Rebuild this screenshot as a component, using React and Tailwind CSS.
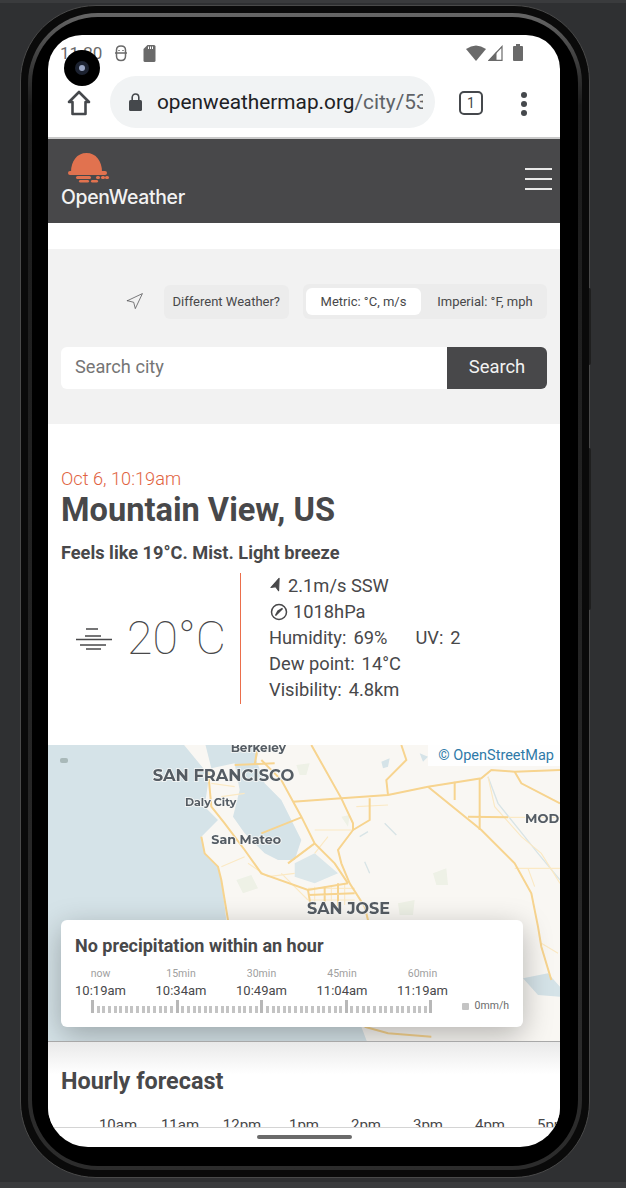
import React from "react";
import { Navigation } from "lucide-react";

const roboto = { fontFamily: "Roboto, sans-serif" };

const minutes = [
  ["now", "10:19am"],
  ["15min", "10:34am"],
  ["30min", "10:49am"],
  ["45min", "11:04am"],
  ["60min", "11:19am"],
];

const hours = ["10am", "11am", "12pm", "1pm", "2pm", "3pm", "4pm", "5pm"];

// main roads, coordinates taken from the reference at 3x
const roads = [
  "M790 15 L880 175 L915 250 L915 270 L870 330 L880 370 L905 430 L950 500 L965 560",
  "M735 185 L880 175 L1020 165 L1140 140 L1300 115 L1330 90 L1400 95 L1536 90",
  "M1140 140 L1300 270 L1400 370 L1450 460 L1470 560 L1480 620 L1510 720",
  "M640 60 L700 120 L760 230 L800 310 L860 370 L900 430",
  "M1020 165 L1015 120 L1075 60 L1060 15",
  "M965 175 L965 240 L915 270",
  "M1295 115 L1295 270 M1220 125 L1220 180 M1260 230 L1380 232",
  "M640 280 L760 232 M720 370 L800 310",
  "M480 90 L490 200 L530 250 L590 330 L640 400 L780 450 L900 430",
  "M460 290 L470 340 L510 380 L520 420 L540 540 L535 600",
  "M780 450 L790 510 M830 440 L830 500 M870 430 L870 500 M780 465 L920 460",
  "M620 75 L630 15 M560 75 L680 70",
  "M1400 95 L1420 130 L1536 190",
  "M950 860 L1020 880 L1150 890",
];

// lighter side roads and the city grid
const sideRoads = [
  "M1380 232 L1536 232 M1400 385 L1536 385 M1320 110 L1340 200 L1420 290 L1480 340 L1536 430",
  "M800 270 L860 270 L915 270 M840 290 L800 340 M925 200 L1020 195",
  "M520 380 L590 350 M600 370 L660 410 L740 400 M700 400 L780 480",
  "M800 440 L800 505 M850 435 L850 500 M890 430 L890 495 M780 445 L920 445 M780 480 L920 480",
  "M1480 610 L1530 640 M1440 385 L1460 440 M520 170 L590 160 M490 130 L560 140",
  "M1170 840 L1300 860 M1020 800 L1120 860",
];

function MapBlock() {
  return (
    <div className="relative h-[297px] shrink-0 overflow-hidden bg-[#f9f7f3] border-b border-[#a8a8a8]">
      <svg viewBox="0 15 1536 888" className="w-full h-full block">
        <defs>
          <filter id="soft" x="-5%" y="-5%" width="110%" height="110%"><feGaussianBlur stdDeviation="2" /></filter>
          <filter id="label"><feGaussianBlur stdDeviation="0.9" /></filter>
        </defs>
        <g filter="url(#soft)">
          <path fill="#d5e3e8" d="M-10 5 H400 L470 90 L480 130 L470 200 L510 240 L460 290 L470 340 L510 380 L520 420 L535 540 L540 640 L720 800 L940 860 L960 913 H-10 Z" />
          <path fill="#d5e3e8" d="M470 5 H640 L625 60 L650 130 L700 180 L730 240 L760 300 L740 360 L690 360 L650 340 L590 280 L555 230 L575 150 L560 70 L490 85 Z" />
          <path fill="#dbe7ea" d="M740 370 L800 340 L870 400 L800 430 L740 410 Z" />
          <path fill="#d5e3e8" d="M1000 65 L1025 55 L1020 80 L1005 85 Z M1115 40 L1140 50 L1125 65 Z M1425 715 L1500 700 L1536 740 L1536 770 L1470 765 Z" />
          <path fill="#eef1e6" d="M565 420 L610 405 L630 445 L585 460 Z M1050 490 L1100 480 L1095 525 L1055 525 Z M745 75 L785 70 L775 105 L755 105 Z M1155 400 L1195 385 L1200 435 L1165 435 Z M880 230 L905 225 L900 260 Z" />
          <path fill="none" stroke="#d8e4e6" strokeWidth="4" d="M1320 110 L1350 190 L1430 290 L1470 340 L1536 420 M1010 250 L1045 285 M950 365 L965 400 M935 290 L960 275" />
          {sideRoads.map((d, i) => (
            <path key={i} d={d} fill="none" stroke="#fbe9c4" strokeWidth="3.5" />
          ))}
          {roads.map((d, i) => (
            <path key={i} d={d} fill="none" stroke="#f7d48f" strokeWidth="6" />
          ))}
        </g>
        <rect x="36" y="54" width="24" height="15" rx="6" fill="#a9b9b9" />
        <g filter="url(#label)" fontFamily="Montserrat, Inter, sans-serif" fontWeight="700" fill="#545c64" stroke="#f8f8f6" strokeWidth="5" paintOrder="stroke">
          <text x="548" y="36" fontSize="36">Berkeley</text>
          <text x="314" y="124" fontSize="49">SAN FRANCISCO</text>
          <text x="411" y="197" fontSize="33">Daly City</text>
          <text x="490" y="313" fontSize="38">San Mateo</text>
          <text x="777" y="522" fontSize="48">SAN JOSE</text>
          <text x="1431" y="249" fontSize="39">MOD</text>
        </g>
      </svg>
      <div className="absolute top-0 right-0 bg-white/90 pl-[10px] pr-[6px] h-[21px] flex items-center text-[14.5px] text-[#2f7aa8]">
        © OpenStreetMap
      </div>
      <div className="absolute left-[13px] top-[175px] w-[462px] h-[107px] bg-white rounded-[6px] shadow-[0_8px_30px_rgba(0,0,0,0.28)] px-[14px] pt-[15px]">
        <div className="text-[18px] leading-[22px] font-bold text-[#48484a]">No precipitation within an hour</div>
        <div className="flex mt-[10px]">
          {minutes.map(([a, b]) => (
            <div key={a} className="w-[80.5px] shrink-0">
              <div className="w-[51px] text-center text-[10.5px] leading-[14px] text-[#a0a0a0]">{a}</div>
              <div className="w-[51px] text-center text-[13px] leading-[18px] mt-[1px] text-[#48484a] whitespace-nowrap">{b}</div>
            </div>
          ))}
        </div>
        <div className="flex items-center -mt-[1px]">
          <div className="ml-[16px] w-[342px] h-[14px] flex justify-between items-end">
            {Array.from({ length: 61 }).map((_, i) => (
              <div key={i} className={i % 15 === 0 ? "w-[3px] h-[13px] bg-[#b8b8b8]" : "w-[3px] h-[7px] bg-[#c4c4c4]"} />
            ))}
          </div>
          <div className="ml-[29px] w-[7px] h-[7px] bg-[#c4c4c4] rounded-[1px]" />
          <div className="ml-[6px] text-[10.5px] leading-[14px] text-[#6b6b6b] whitespace-nowrap">0mm/h</div>
        </div>
      </div>
    </div>
  );
}

function StatusBar() {
  return (
    <div className="h-[41px] shrink-0 flex items-start justify-between pl-[12px] pr-[37px] pt-[9px] text-[#6a6a6a]">
      <div className="flex items-center">
        <span className="text-[17px] leading-[18px]">11:20</span>
        <svg width="14" height="17" viewBox="0 0 14 17" fill="none" stroke="#6a6a6a" strokeWidth="1.5" className="ml-[12px]">
          <path d="M2.5 5 C2.5 2.5 4.5 1 7 1 C9.5 1 11.5 2.5 11.5 5 V11 C11.5 14 9.5 15.5 7 15.5 C4.5 15.5 2.5 14 2.5 11 Z" />
          <path d="M1 8 H13 M5 5 V6 M9 5 V6" />
        </svg>
        <svg width="13" height="17" viewBox="0 0 12 17" className="ml-[15px]"><path fill="#6a6a6a" d="M4 0 H10.5 Q12 0 12 1.5 V15.5 Q12 17 10.5 17 H1.5 Q0 17 0 15.5 V4 Z" /><path stroke="#fff" strokeWidth="1" d="M5 1.5 V4 M7 1.5 V4 M9 1.5 V4" /></svg>
      </div>
      <div className="flex items-center">
        <svg width="20" height="16" viewBox="0 0 20 16"><path fill="#6a6a6a" d="M0 4 Q10 -3 20 4 L10 16 Z" /></svg>
        <svg width="15" height="16" viewBox="0 0 15 16" className="ml-[2px]"><path fill="none" stroke="#6a6a6a" strokeWidth="1.2" d="M14 1.5 V15.4 H1 Z" /><path fill="#6a6a6a" d="M8.5 6.5 V15.4 H1 Z" /></svg>
        <svg width="10" height="17" viewBox="0 0 10 17" className="ml-[10px]"><path fill="#6a6a6a" d="M3 0 H7 V2 H9 Q10 2 10 3 V16 Q10 17 9 17 H1 Q0 17 0 16 V3 Q0 2 1 2 H3 Z" /></svg>
      </div>
    </div>
  );
}

function ChromeBar() {
  return (
    <div className="h-[63px] shrink-0 flex items-start border-b-2 border-[#c9c9c9]">
      <div className="w-[62px] h-[52px] flex items-center justify-center">
        <svg width="24" height="26" viewBox="0 0 24 26" fill="none" stroke="#45484c" strokeWidth="2.6" strokeLinejoin="round" className="mt-[2px] -ml-[1px]">
          <path d="M12 2 L22 12 H18.5 V24 H5.5 V12 H2 Z" />
        </svg>
      </div>
      <div className="w-[325px] h-[52px] bg-[#f1f3f4] rounded-full flex items-center pl-[19px] pr-[12px] overflow-hidden">
        <svg width="13" height="18" viewBox="0 0 13 18" className="shrink-0">
          <path fill="#45484c" d="M1.5 7 H11.5 Q13 7 13 8.5 V16.5 Q13 18 11.5 18 H1.5 Q0 18 0 16.5 V8.5 Q0 7 1.5 7 Z" />
          <path fill="none" stroke="#45484c" strokeWidth="1.6" d="M3.2 7.5 V4.5 C3.2 2.4 4.6 1 6.5 1 C8.4 1 9.8 2.4 9.8 4.5 V7.5" />
        </svg>
        <div className="ml-[15px] mt-[1px] min-w-0 text-[20.8px] whitespace-nowrap overflow-hidden text-[#202124]">
          openweathermap.org<span className="text-[#5f6368]">/city/5375480</span>
        </div>
      </div>
      <div className="ml-[24px] w-[24px] h-[24px] mt-[15px] border-[2px] border-[#45484c] rounded-[5px] flex items-center justify-center text-[14px] leading-none text-[#45484c]">1</div>
      <div className="ml-[38px] mt-[16px] flex flex-col gap-[3px]">
        <div className="w-[6px] h-[6px] rounded-full bg-[#45484c]" />
        <div className="w-[6px] h-[6px] rounded-full bg-[#45484c]" />
        <div className="w-[6px] h-[6px] rounded-full bg-[#45484c]" />
      </div>
    </div>
  );
}

function SiteHeader() {
  return (
    <div className="h-[84px] shrink-0 bg-[#48484a] flex justify-between pl-[13px] pr-[8px]">
      <div className="pt-[13px]">
        <svg width="42" height="31" viewBox="0 0 42 31" className="ml-[7px] block">
          <path fill="#e1724f" d="M3 20 C3 9 9 1 18.5 1 C28 1 34 9 34 20 Z" />
          <rect x="0" y="19" width="39" height="4" rx="2" fill="#e1724f" />
          <rect x="8" y="24" width="15" height="3" rx="1.5" fill="#e1724f" />
          <rect x="28" y="24" width="4" height="3" rx="1.5" fill="#e1724f" />
          <rect x="33" y="24" width="4" height="3" rx="1.5" fill="#e1724f" />
          <rect x="37" y="24" width="4" height="3" rx="1.5" fill="#e1724f" />
          <rect x="11" y="28" width="10" height="2.5" rx="1.2" fill="#e1724f" />
          <rect x="23" y="28" width="7" height="2.5" rx="1.2" fill="#e1724f" />
        </svg>
        <div className="text-[19.4px] leading-[22px] mt-[3px] font-medium text-[#f2f2f2] tracking-[-0.3px]" style={{ fontFamily: "Inter, sans-serif" }}>OpenWeather</div>
      </div>
      <div className="mt-[29px] flex flex-col gap-[8.5px]">
        <div className="w-[27px] h-[1.5px] bg-[#e8e8e8]" />
        <div className="w-[27px] h-[1.5px] bg-[#e8e8e8]" />
        <div className="w-[27px] h-[1.5px] bg-[#e8e8e8]" />
      </div>
    </div>
  );
}

function SearchPanel() {
  return (
    <div className="h-[175px] shrink-0 bg-[#f2f2f2] px-[13px] pt-[35px]">
      <div className="flex items-center justify-end h-[35px]">
        <Navigation size={19} strokeWidth={0.9} color="#48484a" />
        <div className="ml-[20px] h-[34px] px-[9px] flex items-center rounded-[6px] bg-[#ececec] text-[13px] text-[#48484a]">Different Weather?</div>
        <div className="ml-[14px] h-[35px] w-[244px] flex items-center rounded-[6px] bg-[#ececec] pl-[3px] pr-[4px] text-[13px] text-[#48484a]">
          <div className="w-[115px] h-[27px] flex items-center justify-center bg-white rounded-[6px]">Metric: °C, m/s</div>
          <div className="flex-1 text-center pl-[6px]">Imperial: °F, mph</div>
        </div>
      </div>
      <div className="flex h-[42px] mt-[28px]">
        <div className="flex-1 bg-white rounded-l-[6px] flex items-center pl-[14px] pb-[2px] text-[18.2px] text-[#757575]">Search city</div>
        <div className="w-[100px] bg-[#48484a] rounded-r-[6px] flex items-center justify-center pb-[2px] text-[18.4px] text-[#f2f2f2]">Search</div>
      </div>
    </div>
  );
}

function CurrentWeather() {
  return (
    <div className="h-[321px] shrink-0 pl-[13px] pt-[44px] text-[#48484a]">
      <div className="text-[18.2px] leading-[21px] font-light text-[#e1633f]">Oct 6, 10:19am</div>
      <div className="text-[32.6px] leading-[42px] font-bold">Mountain View, US</div>
      <div className="text-[18.2px] leading-[24px] font-bold mt-[10px]">Feels like 19°C. Mist. Light breeze</div>
      <div className="flex mt-[8px]">
        <div className="w-[179px] h-[131px] flex items-center">
          <svg width="36" height="22" viewBox="0 0 36 22" stroke="#48484a" strokeWidth="1.4" className="ml-[15px]">
            <path d="M10 1 H22 M9 8 H25 M0 11.5 H36 M4 17 H30 M10 21 H25" />
          </svg>
          <div className="ml-[15px] text-[46.5px] font-thin leading-none whitespace-nowrap">20°C</div>
        </div>
        <div className="w-px h-[131px] bg-[#eb6e4b]" />
        <div className="ml-[28px] text-[18.3px] leading-[26px]">
          <div className="flex items-center">
            <Navigation size={14} fill="#48484a" stroke="#48484a" className="-rotate-[23deg]" />
            <span className="ml-[5px]">2.1m/s SSW</span>
          </div>
          <div className="flex items-center">
            <svg width="18" height="18" viewBox="0 0 18 18" fill="none" stroke="#48484a" strokeWidth="1.5" className="ml-[1px]">
              <circle cx="9" cy="9" r="7.5" />
              <path d="M5.5 12.5 L12.5 5.5 L8 8 Z" fill="#48484a" />
            </svg>
            <span className="ml-[5px]">1018hPa</span>
          </div>
          <div className="flex">
            <span>Humidity:</span><span className="ml-[7px] w-[62px]">69%</span>
            <span>UV:</span><span className="ml-[7px]">2</span>
          </div>
          <div className="flex"><span>Dew point:</span><span className="ml-[7px]">14°C</span></div>
          <div className="flex"><span>Visibility:</span><span className="ml-[7px]">4.8km</span></div>
        </div>
      </div>
    </div>
  );
}

function Hourly() {
  return (
    <div className="h-[85px] shrink-0 overflow-hidden bg-gradient-to-b from-[#e9e9e9] to-white to-[38%]">
      <div className="pl-[13px] pt-[25px] text-[23.4px] leading-[28px] font-bold text-[#48484a]">Hourly forecast</div>
      <div className="flex pl-[39px] mt-[21px] text-[15px] leading-[18px] text-[#48484a] whitespace-nowrap">
        {hours.map((h) => (
          <div key={h} className="w-[62px] shrink-0 text-center">{h}</div>
        ))}
      </div>
    </div>
  );
}

export default function App() {
  return (
    <div className="relative w-[626px] h-[1188px] overflow-hidden bg-[#2f3032] border-t-[3px] border-b-[6px] border-[#3a3b3d]" style={roboto}>
      <div className="ml-[20px] mt-[2px] w-[570px] h-[1173px] rounded-[76px] bg-[#0a0a0a] border border-[#4a4a4a] p-[7px]">
        <div className="w-full h-full rounded-[70px] p-[4px] bg-gradient-to-b from-[#666666] via-[#1c1c1c] via-[8%] to-[#2c2c2c]">
          <div className="w-full h-full rounded-[66px] bg-black pl-[16px] pr-[18px] pt-[18px] pb-[17px]">
            <div className="relative w-[512px] h-[1112px] rounded-t-[34px] rounded-b-[40px] bg-white overflow-hidden flex flex-col">
              <StatusBar />
              <ChromeBar />
              <SiteHeader />
              <div className="h-[26px] shrink-0" />
              <SearchPanel />
              <CurrentWeather />
              <MapBlock />
              <Hourly />
              <div className="flex-1 border-t border-[#d4d4d4] flex items-center justify-center pb-[2px]">
                <div className="w-[95px] h-[4px] rounded-full bg-[#6b6b6b]" />
              </div>
              <div className="absolute left-[16px] top-[15px] w-[36px] h-[36px] rounded-full bg-black flex items-center justify-center">
                <div className="w-[14px] h-[14px] rounded-full bg-[#1c2230] flex items-center justify-center">
                  <div className="w-[6px] h-[6px] rounded-full bg-[#9aa6c4]" />
                </div>
              </div>
            </div>
          </div>
        </div>
      </div>
      <div className="absolute left-[589px] top-[285px] w-[2px] h-[77px] bg-[#1f1f1f] rounded-r" />
      <div className="absolute left-[589px] top-[445px] w-[2px] h-[162px] bg-[#1f1f1f] rounded-r" />
    </div>
  );
}
